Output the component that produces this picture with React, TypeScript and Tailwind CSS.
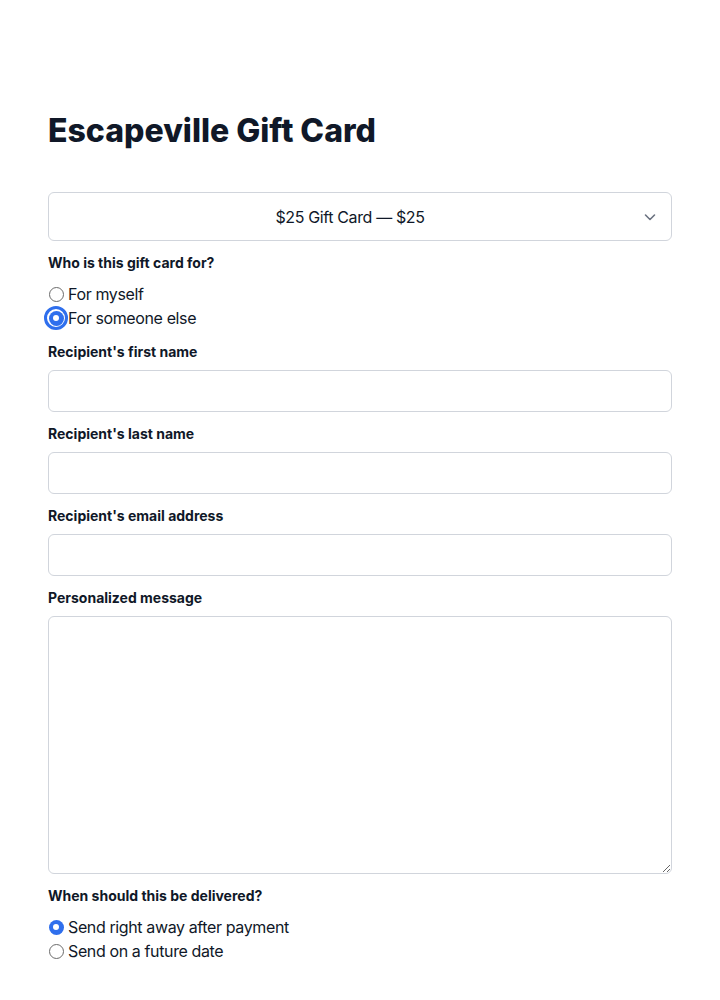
import React from "react";

function Radio({ checked, focus, label }: { checked?: boolean; focus?: boolean; label: string }) {
  return (
    <label className="flex items-center h-6 text-base text-gray-900">
      <span className="relative flex items-center justify-center w-[16px] h-[16px] mr-[4px]">
        {focus && (
          <span className="absolute -inset-[4px] rounded-full border-[3px] border-[#2f6fed]" />
        )}
        {checked ? (
          <span className="w-[15px] h-[15px] rounded-full bg-[#2f6fed] flex items-center justify-center">
            <span className="w-[6px] h-[6px] rounded-full bg-white" />
          </span>
        ) : (
          <span className="w-[15px] h-[15px] rounded-full border border-[#6b6b6b] bg-white" />
        )}
      </span>
      <span className="tracking-[-0.38px]">{label}</span>
    </label>
  );
}

function Field({ label, children }: { label: string; children: React.ReactNode }) {
  return (
    <div className="flex flex-col">
      <div className="text-sm font-bold text-gray-900 leading-5 mb-2">{label}</div>
      {children}
    </div>
  );
}

export default function App() {
  return (
    <div
      className="min-h-[1000px] bg-white px-12 pt-28"
      style={{ fontFamily: "Inter, 'Noto Sans', sans-serif" }}
    >
      <h1 className="text-[32px] leading-9 font-extrabold text-gray-900 translate-y-[1px]">Escapeville Gift Card</h1>
      <div className="mt-11 flex flex-col gap-[12px]">
        <div className="relative h-[49px] rounded-md border border-gray-300 bg-white flex items-center justify-center pl-3 pr-8 text-base text-gray-900">
          <span className="tracking-[-0.37px]">$25 Gift Card — $25</span>
          <svg
            className="absolute right-[15px] top-1/2 -translate-y-1/2"
            width="12"
            height="8"
            viewBox="0 0 12 8"
            fill="none"
          >
            <path d="M1.5 2l4.5 4.5L10.5 2" stroke="#6b7280" strokeWidth="1.6" strokeLinecap="round" strokeLinejoin="round" />
          </svg>
        </div>
        <div className="flex flex-col">
          <div className="text-sm font-bold text-gray-900 leading-5 mb-[9px]">Who is this gift card for?</div>
          <Radio label="For myself" />
          <Radio label="For someone else" checked focus />
        </div>
        <Field label="Recipient's first name">
          <div className="h-[42px] rounded-md border border-gray-300 bg-white" />
        </Field>
        <Field label="Recipient's last name">
          <div className="h-[42px] rounded-md border border-gray-300 bg-white" />
        </Field>
        <Field label="Recipient's email address">
          <div className="h-[42px] rounded-md border border-gray-300 bg-white" />
        </Field>
        <Field label="Personalized message">
          <textarea className="block h-[258px] w-full rounded-md border border-gray-300 bg-white outline-none" />
        </Field>
        <div className="flex flex-col">
          <div className="text-sm font-bold text-gray-900 leading-5 mb-[9px]">When should this be delivered?</div>
          <Radio label="Send right away after payment" checked />
          <Radio label="Send on a future date" />
        </div>
      </div>
    </div>
  );
}
